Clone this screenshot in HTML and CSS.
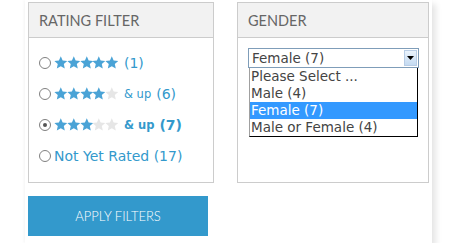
FILE: index.html
```html
<!DOCTYPE html>
<html>
<head>
<meta charset="utf-8">
<link rel="stylesheet" href="styles.css">
</head>
<body>
<svg width="0" height="0" class="defs">
  <defs>
    <symbol id="star" viewBox="0 0 24 23">
      <polygon points="12,0.5 15.29,7.97 23.41,8.79 17.33,14.23 19.05,22.21 12,18.1 4.95,22.21 6.67,14.23 0.59,8.79 8.71,7.97"/>
    </symbol>
  </defs>
</svg>
<div class="card">
  <div class="panels">
    <section class="panel rating">
      <h2 class="panel-head">RATING FILTER</h2>
      <ul class="panel-body rows">
        <li class="row">
          <span class="radio"></span>
          <span class="stars">
            <svg class="star on"><use href="#star"/></svg><svg class="star on"><use href="#star"/></svg><svg class="star on"><use href="#star"/></svg><svg class="star on"><use href="#star"/></svg><svg class="star on"><use href="#star"/></svg>
          </span>
          <span class="count">(1)</span>
        </li>
        <li class="row">
          <span class="radio"></span>
          <span class="stars">
            <svg class="star on"><use href="#star"/></svg><svg class="star on"><use href="#star"/></svg><svg class="star on"><use href="#star"/></svg><svg class="star on"><use href="#star"/></svg><svg class="star off"><use href="#star"/></svg>
          </span>
          <span class="up">&amp; up</span><span class="count">(6)</span>
        </li>
        <li class="row selected">
          <span class="radio checked"></span>
          <span class="stars">
            <svg class="star on"><use href="#star"/></svg><svg class="star on"><use href="#star"/></svg><svg class="star on"><use href="#star"/></svg><svg class="star off"><use href="#star"/></svg><svg class="star off"><use href="#star"/></svg>
          </span>
          <span class="up">&amp; up</span><span class="count">(7)</span>
        </li>
        <li class="row">
          <span class="radio"></span>
          <span class="label">Not Yet Rated (17)</span>
        </li>
      </ul>
    </section>
    <section class="panel gender">
      <h2 class="panel-head">GENDER</h2>
      <div class="panel-body">
        <div class="select">
          <div class="select-box">
            <span class="value">Female (7)</span>
            <span class="arrow"><svg width="7" height="4" viewBox="0 0 7 4"><polygon points="0,0 7,0 3.5,4" fill="#000"/></svg></span>
          </div>
          <ul class="options">
            <li>Please Select ...</li>
            <li>Male (4)</li>
            <li class="hl">Female (7)</li>
            <li>Male or Female (4)</li>
          </ul>
        </div>
      </div>
    </section>
  </div>
  <button class="apply">APPLY FILTERS</button>
</div>
</body>
</html>
```
FILE: styles.css
```css
html, body {
  margin: 0;
  padding: 0;
  background: #fff;
}
body {
  padding-left: 25px;
  font-family: "DejaVu Sans", Verdana, sans-serif;
}
.defs {
  position: absolute;
}
.card {
  width: 407px;
  height: 243px;
  box-sizing: border-box;
  padding: 2px 3px 0 3px;
  background: #fff;
  box-shadow: 4px 4px 6px rgba(0, 0, 0, 0.10), -1px 0 3px rgba(0, 0, 0, 0.04);
}
.panels {
  display: flex;
  gap: 23px;
}
.panel {
  box-sizing: border-box;
  border: 1px solid #cccccc;
  height: 181px;
}
.rating {
  width: 186px;
}
.gender {
  width: 192px;
}
.panel-head {
  margin: 0;
  height: 34px;
  line-height: 35px;
  padding-left: 10px;
  background: #f2f2f2;
  border-bottom: 1px solid #cccccc;
  font-family: Lato, "Open Sans", sans-serif;
  font-weight: 400;
  font-size: 14.5px;
  color: #666;
}
.panel-body {
  margin: 0;
  padding: 9px 0 0 10px;
  list-style: none;
}
.row {
  height: 31px;
  display: flex;
  align-items: center;
  font-size: 14px;
  color: #3399cc;
}
.radio {
  width: 12px;
  height: 12px;
  box-sizing: border-box;
  border: 1px solid #808080;
  border-radius: 50%;
  background: #fff;
  margin-right: 3px;
  display: flex;
  align-items: center;
  justify-content: center;
}
.radio.checked::after {
  content: "";
  width: 4px;
  height: 4px;
  border-radius: 50%;
  background: #555;
}
.stars {
  display: flex;
  margin-right: 6px;
}
.star {
  width: 13.6px;
  height: 13px;
  margin-right: -0.8px;
}
.star.on {
  fill: #4aa3d6;
}
.star.off {
  fill: #e6e6e6;
}
.up {
  font-size: 11.5px;
  margin-right: 5px;
  margin-top: 1px;
}
.selected .up,
.selected .count {
  font-weight: bold;
}
.gender .panel-body {
  padding-top: 10px;
}
.select {
  position: relative;
  width: 171px;
  font-size: 13.5px;
}
.select-box {
  box-sizing: border-box;
  height: 20px;
  border: 1px solid #7f9db9;
  display: flex;
  align-items: center;
  justify-content: space-between;
  padding-left: 3px;
  color: #444;
}
.arrow {
  width: 13px;
  height: 16px;
  margin-right: 1px;
  box-sizing: border-box;
  border: 1px solid #b8cde6;
  background: linear-gradient(#eaf3fc, #c4daf1);
  display: flex;
  align-items: center;
  justify-content: center;
}
.options {
  position: absolute;
  left: 1px;
  top: 20px;
  width: 169px;
  box-sizing: border-box;
  margin: 0;
  padding: 0;
  list-style: none;
  background: #fff;
  border-left: 1px solid #a0a0a0;
  border-right: 1px solid #000;
  border-bottom: 1px solid #000;
  color: #444;
}
.options li {
  height: 17px;
  line-height: 17px;
  padding-left: 1px;
  white-space: nowrap;
}
.options li.hl {
  background: #3399ff;
  color: #fff;
}
.apply {
  display: block;
  margin-top: 13px;
  width: 180px;
  height: 40px;
  border: none;
  background: #3399cc;
  color: #fff;
  font-family: Lato, "Open Sans", sans-serif;
  font-size: 13px;
  font-weight: 300;
  padding: 0;
}
```
